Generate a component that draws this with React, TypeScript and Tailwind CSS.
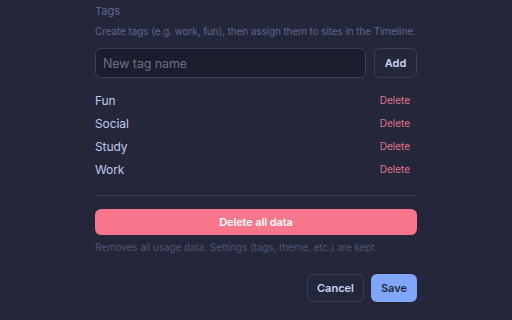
const tags = ["Fun", "Social", "Study", "Work"];

export default function App() {
  return (
    <div
      className="h-[320px] w-[512px] overflow-hidden bg-[#24273a]"
      style={{ fontFamily: "Inter, 'Noto Sans', sans-serif" }}
    >
      <div className="mx-auto w-[322px] pt-[3px]">
        {/* Tags section */}
        <div className="text-[11px] leading-[16px] text-[#5f6591]">Tags</div>
        <p className="mt-[4px] whitespace-nowrap text-[10px] leading-[16px] tracking-[-0.1px] text-[#5f6591]">
          Create tags (e.g. work, fun), then assign them to sites in the Timeline.
        </p>

        <div className="mt-[9px] flex gap-[8px]">
          <input
            className="h-[30px] min-w-0 flex-1 rounded-[6px] border border-[#3a3e5c] bg-[#1c1d2c] px-[7px] text-[12.5px] tracking-[-0.1px] text-[#cad3f5] outline-none placeholder:text-[#6b6f8a]"
            placeholder="New tag name"
          />
          <button className="h-[30px] w-[43px] rounded-[6px] border border-[#3a3e5c] bg-[#24273a] text-[11px] font-semibold text-[#cad3f5]">
            Add
          </button>
        </div>

        <ul className="mt-[11px]">
          {tags.map((t) => (
            <li key={t} className="flex h-[23px] items-center justify-between">
              <span className="text-[12px] tracking-[-0.1px] text-[#c3c8e8]">{t}</span>
              <button className="px-[7px] text-[10px] text-[#e0728c]">Delete</button>
            </li>
          ))}
        </ul>

        <div className="mt-[14px] border-t border-[#363a55]" />

        <button className="mt-[13px] h-[26px] w-full rounded-[6px] bg-[#f7768b] text-[11px] font-semibold tracking-[-0.1px] text-white">
          Delete all data
        </button>
        <p className="mt-[6px] text-[10px] leading-[12px] tracking-[-0.1px] text-[#4f5478]">
          Removes all usage data. Settings (tags, theme, etc.) are kept.
        </p>

        <div className="mt-[21px] flex justify-end gap-[7px]">
          <button className="h-[28px] w-[57px] rounded-[6px] border border-[#3a3e5c] text-[11px] font-semibold text-[#cad3f5]">
            Cancel
          </button>
          <button className="h-[28px] w-[46px] rounded-[6px] bg-[#7fa6fa] text-[11px] font-semibold text-[#24273a]">
            Save
          </button>
        </div>
      </div>
    </div>
  );
}
